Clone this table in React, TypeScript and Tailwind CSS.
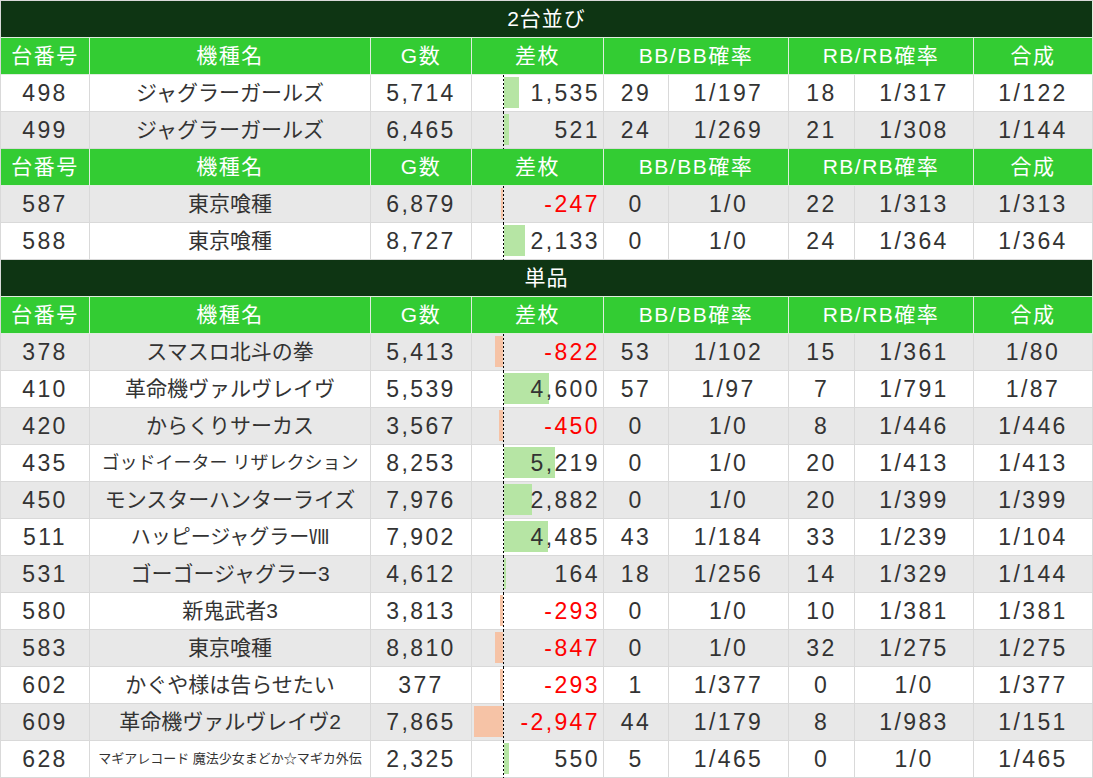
type Row = {
  no: string;
  name: string;
  nameSize?: string;
  g: string;
  diff: number;
  bb: string;
  bbp: string;
  rb: string;
  rbp: string;
  total: string;
  gray: boolean;
};

type Block =
  | { kind: "title"; label: string }
  | { kind: "head" }
  | { kind: "row"; row: Row };

const r = (
  no: string,
  name: string,
  g: string,
  diff: number,
  bb: string,
  bbp: string,
  rb: string,
  rbp: string,
  total: string,
  gray: boolean,
  nameSize?: string
): Block => ({ kind: "row", row: { no, name, g, diff, bb, bbp, rb, rbp, total, gray, nameSize } });

const blocks: Block[] = [
  { kind: "title", label: "2台並び" },
  { kind: "head" },
  r("498", "ジャグラーガールズ", "5,714", 1535, "29", "1/197", "18", "1/317", "1/122", false),
  r("499", "ジャグラーガールズ", "6,465", 521, "24", "1/269", "21", "1/308", "1/144", true),
  { kind: "head" },
  r("587", "東京喰種", "6,879", -247, "0", "1/0", "22", "1/313", "1/313", true),
  r("588", "東京喰種", "8,727", 2133, "0", "1/0", "24", "1/364", "1/364", false),
  { kind: "title", label: "単品" },
  { kind: "head" },
  r("378", "スマスロ北斗の拳", "5,413", -822, "53", "1/102", "15", "1/361", "1/80", true),
  r("410", "革命機ヴァルヴレイヴ", "5,539", 4600, "57", "1/97", "7", "1/791", "1/87", false),
  r("420", "からくりサーカス", "3,567", -450, "0", "1/0", "8", "1/446", "1/446", true),
  r("435", "ゴッドイーター リザレクション", "8,253", 5219, "0", "1/0", "20", "1/413", "1/413", false, "text-[18px]"),
  r("450", "モンスターハンターライズ", "7,976", 2882, "0", "1/0", "20", "1/399", "1/399", true),
  r("511", "ハッピージャグラーⅧ", "7,902", 4485, "43", "1/184", "33", "1/239", "1/104", false, "text-[20px]"),
  r("531", "ゴーゴージャグラー3", "4,612", 164, "18", "1/256", "14", "1/329", "1/144", true),
  r("580", "新鬼武者3", "3,813", -293, "0", "1/0", "10", "1/381", "1/381", false),
  r("583", "東京喰種", "8,810", -847, "0", "1/0", "32", "1/275", "1/275", true),
  r("602", "かぐや様は告らせたい", "377", -293, "1", "1/377", "0", "1/0", "1/377", false),
  r("609", "革命機ヴァルヴレイヴ2", "7,865", -2947, "44", "1/179", "8", "1/983", "1/151", true),
  r("628", "マギアレコード 魔法少女まどか☆マギカ外伝", "2,325", 550, "5", "1/465", "0", "1/0", "1/465", false, "text-[13px]"),
];

const cell = "h-[37px] border-r border-b border-[#d9d9d9] flex items-center justify-center";
const num = "font-['Liberation_Sans',Arial,sans-serif] text-[23px] tracking-[2.4px] text-[#333]";

function HeadRow() {
  const h =
    "h-[37px] border-r border-b border-[#dfeede] bg-[#33cc33] flex items-center justify-center text-white text-[21px] tracking-[1.5px]";
  return (
    <>
      <div className={h}>台番号</div>
      <div className={h}>機種名</div>
      <div className={h}>G数</div>
      <div className={h}>差枚</div>
      <div className={`${h} col-span-2`}>BB/BB確率</div>
      <div className={`${h} col-span-2`}>RB/RB確率</div>
      <div className={h}>合成</div>
    </>
  );
}

function Diff({ v }: { v: number }) {
  const w = Math.round(Math.abs(v) * 0.00978);
  const txt = (v < 0 ? "-" : "") + Math.abs(v).toLocaleString("en-US");
  return (
    <div className={`${cell} relative justify-end pr-[3px]`}>
      {v >= 0 ? (
        <div className="absolute left-[32px] top-[2px] bottom-[3px] bg-[#b6e5a4]" style={{ width: w }} />
      ) : (
        <div className="absolute top-[2px] bottom-[3px] bg-[#f6c3a6]" style={{ width: w, left: 31 - w }} />
      )}
      <div className="absolute left-[31px] top-0 bottom-[-1px] w-px bg-[linear-gradient(to_bottom,#000_60%,transparent_60%)] bg-[length:1px_4px]" />
      <span className={`relative ${num} ${v < 0 ? "text-[#ff0000]" : ""}`}>{txt}</span>
    </div>
  );
}

function DataRow({ row }: { row: Row }) {
  const bg = row.gray ? "bg-[#e8e8e8]" : "bg-white";
  return (
    <>
      <div className={`${cell} ${bg}`}><span className={num}>{row.no}</span></div>
      <div className={`${cell} ${bg}`}>
        <span className={`${row.nameSize ?? "text-[21px]"} text-[#333] whitespace-nowrap`}>{row.name}</span>
      </div>
      <div className={`${cell} ${bg}`}><span className={num}>{row.g}</span></div>
      <div className={bg}><Diff v={row.diff} /></div>
      <div className={`${cell} ${bg}`}><span className={num}>{row.bb}</span></div>
      <div className={`${cell} ${bg}`}><span className={num}>{row.bbp}</span></div>
      <div className={`${cell} ${bg}`}><span className={num}>{row.rb}</span></div>
      <div className={`${cell} ${bg}`}><span className={num}>{row.rbp}</span></div>
      <div className={`${cell} ${bg}`}><span className={num}>{row.total}</span></div>
    </>
  );
}

export default function App() {
  return (
    <div className="w-[1093px] h-[778px] overflow-hidden bg-white font-['Liberation_Sans','Noto_Sans_CJK_JP',sans-serif]">
      <div className="grid grid-cols-[89px_281px_101px_132px_65px_120px_66px_119px_119px] border-l border-t border-[#d9d9d9]">
        {blocks.map((b, i) => {
          if (b.kind === "title")
            return (
              <div
                key={i}
                className="col-span-9 h-[37px] border-r border-b border-[#dfeede] bg-[#0e3513] flex items-center justify-center text-white text-[21px] tracking-[1px]"
              >
                {b.label}
              </div>
            );
          if (b.kind === "head") return <HeadRow key={i} />;
          return <DataRow key={i} row={b.row} />;
        })}
      </div>
    </div>
  );
}
